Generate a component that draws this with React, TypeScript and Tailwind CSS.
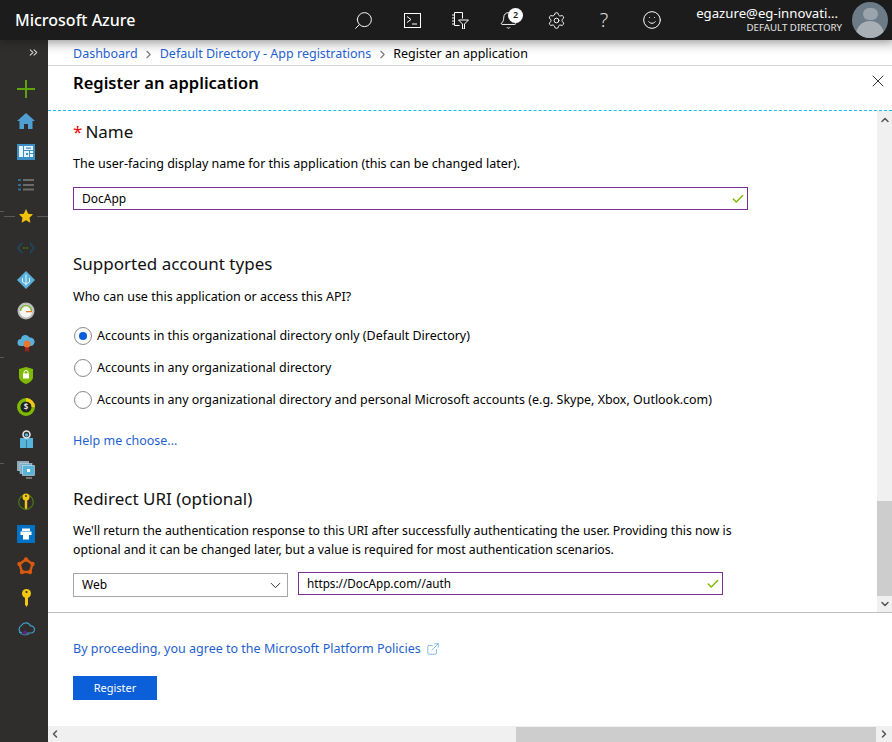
import { Check, ChevronDown, ChevronRight, ChevronsRight, Search, Settings, Smile, X, Bell, ExternalLink } from "lucide-react";

const font = "font-['Noto_Sans','Open_Sans',sans-serif]";

function TerminalIcon() {
  return (
    <svg width="17" height="15" viewBox="0 0 17 15" fill="none" stroke="#fff" strokeWidth="1">
      <rect x="0.5" y="0.5" width="16" height="14" />
      <path d="M3 3.5 7 6.5 3 9.5M8 11h5" />
    </svg>
  );
}

function FilterIcon() {
  return (
    <svg width="17" height="17" viewBox="0 0 17 17" fill="none" stroke="#fff" strokeWidth="1">
      <path d="M2.5 13.5v-13h8v6M2.5 13.5h5" />
      <path d="M0 3h2.5M0 6h2.5M0 9h2.5M0 12h2.5" />
      <path d="M6.5 8h10l-4 4v5h-2v-5z" />
    </svg>
  );
}

function SideIcon({ n }: { n: number }) {
  const icons = [
    <svg width="18" height="18" viewBox="0 0 18 18"><path d="M8 0h2v8h8v2h-8v8H8v-8H0V8h8z" fill="#5ea50b" /></svg>,
    <svg width="18" height="16" viewBox="0 0 18 16"><path d="M9 0 18 8h-2.500v8H11v-5H7v5H2.500V8H0z" fill="#4e9fd3" /></svg>,
    <svg width="18" height="16" viewBox="0 0 18 16"><rect width="18" height="16" fill="#3b8fc4" /><path d="M2 2h4v11H2zM7 2h9v4H7zM7 7h5v6H7zM13 7h3v2h-3zM13 10h3v3h-3z" fill="#e8f3fa" /><path d="M9 3.500h5v1.200H9zM9 9h2v2H9z" fill="#3b8fc4" /></svg>,
    <svg width="16" height="13" viewBox="0 0 16 13"><path d="M5 1h11v2H5zM5 6h11v2H5zM5 10.500h11v2H5z" fill="#6b6b6b" /><path d="M0 1h3v2H0zM0 6h3v2H0zM0 10.500h3v2H0z" fill="#2f6f96" /></svg>,
    <svg width="14" height="14" viewBox="0 0 24 24"><path d="m12 0 3.700 8 8.300 1-6 5.800 1.500 8.700-7.500-4.300-7.500 4.300L6 14.800 0 9l8.300-1z" fill="#f4c20d" /></svg>,
    <svg width="18" height="12" viewBox="0 0 18 12" fill="none"><path d="M5 1 1 6l4 5M13 1l4 5-4 5" stroke="#1f4a60" strokeWidth="1.500" /><path d="M6 6h6" stroke="#3f6212" strokeWidth="2" strokeDasharray="2 1" /></svg>,
    <svg width="18" height="18" viewBox="0 0 18 18"><path d="M9 0 18 9 9 18 0 9z" fill="#58b0dc" /><path d="M9 3.500v11M5.500 7v4l3.500 2 3.500-2V7" stroke="#e5f4fb" fill="none" /></svg>,
    <svg width="18" height="18" viewBox="0 0 18 18"><circle cx="9" cy="9" r="8.500" fill="#b9bcbc" /><circle cx="9" cy="9" r="6.500" fill="#f5f6f1" /><path d="M3.500 9a5.500 5.500 0 0 1 11 0" fill="none" stroke="#7fb23a" strokeWidth="1.500" /><path d="M9 9h6v1.300H9z" fill="#e8792b" /></svg>,
    <svg width="18" height="18" viewBox="0 0 18 18"><path d="M4 12a3.500 3.500 0 0 1 0-7 4.500 4.500 0 0 1 8.500-1.500A4 4 0 0 1 14 12z" fill="#58b0dc" /><path d="M8 13h4v5l-2-1.200L8 18z" fill="#a8201a" /><circle cx="10" cy="10" r="3.500" fill="#e8792b" /></svg>,
    <svg width="14" height="17" viewBox="0 0 14 17"><path d="M7 0 14 2v8c0 3-3 5.500-7 7-4-1.500-7-4-7-7V2z" fill="#7fba00" /><rect x="4" y="6.500" width="6" height="5" fill="#fff" /><path d="M5 7V5.500a2 2 0 0 1 4 0V7" fill="none" stroke="#fff" /></svg>,
    <svg width="18" height="18" viewBox="0 0 18 18"><circle cx="9" cy="9" r="7.300" fill="#222" stroke="#7fba00" strokeWidth="3.400" /><path d="M9 1.700A7.300 7.300 0 0 1 16.300 9" fill="none" stroke="#f2c811" strokeWidth="3.400" /><text x="9" y="12" fontSize="8" fill="#ddd" textAnchor="middle" fontWeight="700">$</text></svg>,
    <svg width="13" height="18" viewBox="0 0 13 18"><rect y="8" width="13" height="10" fill="#59b4d9" /><path d="M6.500 10v8" stroke="#2f7ea3" /><circle cx="6.500" cy="4.500" r="3.500" fill="none" stroke="#e8e8e8" strokeWidth="1.600" /><circle cx="6.500" cy="5" r="1.800" fill="#59b4d9" /></svg>,
    <svg width="18" height="18" viewBox="0 0 18 18"><rect x="0" y="0" width="12" height="10" fill="#8fa8b5" /><rect x="3" y="2.500" width="12" height="10" fill="#6faecb" stroke="#ddd" strokeWidth=".5" /><rect x="5.500" y="4.500" width="12" height="10" fill="#59b4d9" stroke="#eee" strokeWidth=".5" /><path d="M9 16.500h6v1H9z" fill="#bbb" /><path d="M10 8h3v3h-3z" fill="#fff" /></svg>,
    <svg width="16" height="18" viewBox="0 0 16 18"><circle cx="8" cy="9" r="7.300" fill="none" stroke="#4f7a12" strokeWidth="1.200" /><circle cx="8" cy="4" r="3.500" fill="#f2c811" /><path d="M6.800 6h2.400v9L8 16.500 6.800 15z" fill="#f2c811" /><circle cx="8" cy="3" r="1" fill="#2f2f2f" /></svg>,
    <svg width="18" height="18" viewBox="0 0 18 18"><rect width="18" height="18" fill="#0072c6" /><path d="M5 3.500h8V6H5zM3.500 6.500h11V10H3.500zM6 10h6v4.500H6z" fill="#fff" /></svg>,
    <svg width="18" height="18" viewBox="0 0 18 18"><path d="M9 2.500 15.500 7 13 15H5L2.500 7z" fill="none" stroke="#d9590f" strokeWidth="2.400" /><circle cx="9" cy="2.500" r="2.200" fill="#d9590f" /><circle cx="15.500" cy="7" r="2.200" fill="#d9590f" /><circle cx="2.500" cy="7" r="2.200" fill="#d9590f" /><circle cx="13" cy="15" r="2.200" fill="#d9590f" /><circle cx="5" cy="15" r="2.200" fill="#d9590f" /></svg>,
    <svg width="11" height="18" viewBox="0 0 11 18"><circle cx="5.500" cy="4.500" r="4.500" fill="#f2c811" /><path d="M4 8h3v7.500L5.500 18 4 15.500z" fill="#f2c811" /><circle cx="5.500" cy="3" r="1.100" fill="#2f2f2f" /></svg>,
    <svg width="18" height="14" viewBox="0 0 18 14"><path d="M5 11a4 4 0 0 1-.5-7.500 5 5 0 0 1 9 0.500A3.500 3.500 0 0 1 14.500 11H7" fill="none" stroke="#3f9cc8" strokeWidth="1.200" /><path d="M2 10c3 3 6 3.500 10 2" fill="none" stroke="#3f9cc8" /><circle cx="8" cy="10.500" r="2" fill="#68217a" /></svg>,
  ];
  return icons[n];
}

const sideIndexes = Array.from({ length: 18 }, (_, i) => i);

function Radio({ checked, label }: { checked?: boolean; label: string }) {
  return (
    <div className="flex items-center h-8">
      <span className="w-[18px] h-[18px] ml-[1px] rounded-full border border-[#8a8a8a] bg-white flex items-center justify-center shrink-0">
        {checked && <span className="w-[8px] h-[8px] rounded-full bg-[#0b5fd8]" />}
      </span>
      <span className="ml-[5px] text-[12.45px] text-black whitespace-nowrap">{label}</span>
    </div>
  );
}

export default function App() {
  return (
    <div className={`${font} w-[892px] h-[742px] overflow-hidden flex flex-col bg-white`}>
      <header className="h-10 shrink-0 bg-[#1c1c1c] flex items-center text-white relative z-10 shadow-[0_2px_8px_rgba(0,0,0,0.3)]">
        <div className="w-[340px] pl-[15px] text-[16px] font-medium">Microsoft Azure</div>
        <div className="flex items-center h-10">
          <span className="w-12 flex justify-center -scale-x-100"><Search size={21} strokeWidth={1.1} /></span>
          <span className="w-12 flex justify-center"><TerminalIcon /></span>
          <span className="w-12 flex justify-center"><FilterIcon /></span>
          <span className="w-12 flex justify-center relative">
            <Bell size={19} strokeWidth={1.2} />
            <span className="absolute left-[24px] -top-[3px] w-[15px] h-[15px] rounded-full bg-white text-[#1c1c1c] text-[9px] font-semibold flex items-center justify-center">2</span>
          </span>
          <span className="w-12 flex justify-center"><Settings size={19} strokeWidth={1.2} /></span>
          <span className="w-12 flex justify-center text-[20px] font-light text-[#ddd]">?</span>
          <span className="w-12 flex justify-center"><Smile size={20} strokeWidth={1.2} /></span>
        </div>
        <div className="ml-auto w-[150px] text-right leading-none">
          <div className="text-[13.2px] whitespace-nowrap pr-[4px]">egazure@eg-innovati...</div>
          <div className="text-[9.7px] mt-[3px] text-[#e6e6e6] whitespace-nowrap">DEFAULT DIRECTORY</div>
        </div>
        <div className="w-9 h-9 rounded-full bg-[#6d7b87] ml-[10px] mr-[4px] overflow-hidden flex flex-col items-center shrink-0">
          <span className="w-[15px] h-[15px] rounded-full bg-[#9aa4ac] mt-[6px]" />
          <span className="w-7 h-5 rounded-t-full bg-[#a8b0b6] mt-[1px]" />
        </div>
      </header>

      <div className="flex-1 flex min-h-0">
        <aside className="w-12 shrink-0 bg-[#2f2e2d] relative text-[#cfcfcf] pl-[4px]">
          <div className="h-[33px] flex items-start justify-end pr-[8px] pt-[6px]"><ChevronsRight size={13} /></div>
          {sideIndexes.map((i) => (
            <div key={i} className={`h-[31.8px] flex items-center ${i === 4 ? "justify-start gap-[4px]" : "justify-center"}`}>
              {i === 4 && <span className="w-[11px] h-px bg-[#5a5a5a] shrink-0" />}
              <SideIcon n={i} />
              {i === 4 && <span className="w-[11px] h-px bg-[#5a5a5a] shrink-0" />}
            </div>
          ))}
          <span className="absolute left-0 top-[171px] w-1 h-px bg-[#5a5a5a]" />
          <span className="absolute left-0 top-[317px] w-1 h-px bg-[#5a5a5a]" />
          <span className="absolute left-0 top-[423px] w-1 h-px bg-[#5a5a5a]" />
        </aside>

        <main className="flex-1 min-w-0 flex flex-col">
          <div className="h-[26px] shrink-0 border-b border-[#d4d4d4] bg-gradient-to-b from-[#e4e4e4] to-white to-60% pl-[25px] pt-[4px] flex items-center text-[12.5px] whitespace-nowrap">
            <span className="text-[#1f5fd0]">Dashboard</span>
            <ChevronRight size={13} className="mx-[4.5px] text-[#777]" />
            <span className="text-[#1f5fd0]">Default Directory - App registrations</span>
            <ChevronRight size={13} className="mx-[4.5px] text-[#777]" />
            <span className="text-black">Register an application</span>
          </div>

          <div className="h-[45px] shrink-0 border-b border-dashed border-[#15bdf0] pl-[25px] pr-[4px] flex items-start justify-between">
            <h1 className="text-[16.55px] font-semibold text-black mt-[5px] leading-6">Register an application</h1>
            <X size={20} strokeWidth={1.2} className="mt-[5px] text-[#333]" />
          </div>

          <div className="h-[502px] shrink-0 flex border-b border-[#bdbdbd]">
            <div className="flex-1 min-w-0 pl-[25px] pt-[9px]">
              <div className="text-[17px] leading-6 text-[#111]"><span className="text-[#e00] mr-[3px]">*</span>Name</div>
              <p className="text-[12.5px] mt-[10px] leading-5 text-black">The user-facing display name for this application (this can be changed later).</p>
              <div className="w-[675px] h-[23px] mt-[13px] border border-[#7a2f96] flex items-center justify-between pl-2 pr-[2px] text-[12px] text-black">
                DocApp
                <Check size={14} strokeWidth={2.5} className="text-[#7fba00]" />
              </div>

              <h2 className="text-[17px] leading-6 text-[#111] mt-[42px]">Supported account types</h2>
              <p className="text-[12.5px] mt-[11px] leading-5 text-black">Who can use this application or access this API?</p>
              <div className="mt-[13px]">
                <Radio checked label="Accounts in this organizational directory only (Default Directory)" />
                <Radio label="Accounts in any organizational directory" />
                <Radio label="Accounts in any organizational directory and personal Microsoft accounts (e.g. Skype, Xbox, Outlook.com)" />
              </div>
              <div className="text-[12.5px] text-[#1f5fd0] mt-[15px] leading-5">Help me choose...</div>

              <h2 className="text-[17px] leading-6 text-[#111] mt-[36px]">Redirect URI (optional)</h2>
              <p className="text-[12.28px] mt-[10px] leading-[19px] text-black w-[690px]">We'll return the authentication response to this URI after successfully authenticating the user. Providing this now is optional and it can be changed later, but a value is required for most authentication scenarios.</p>
              <div className="flex mt-[13px] gap-[10px] items-start">
                <div className="w-[215px] h-6 mt-[1px] border border-[#a6a6a6] flex items-center justify-between pl-2 pr-[3px] text-[12px] text-black">
                  Web
                  <ChevronDown size={17} strokeWidth={1.4} className="text-[#333]" />
                </div>
                <div className="w-[425px] h-[23px] border border-[#7a2f96] flex items-center justify-between pl-2 pr-[2px] text-[11.7px] text-black">
                  https://DocApp.com//auth
                  <Check size={14} strokeWidth={2.5} className="text-[#7fba00]" />
                </div>
              </div>
            </div>
            <div className="w-[15px] shrink-0 bg-[#f0f0f0] flex flex-col items-center text-[#555]">
              <ChevronDown size={12} strokeWidth={3} className="rotate-180 mt-[3px]" />
              <div className="mt-auto w-full h-[95px] bg-[#cdcdcd]" />
              <ChevronDown size={12} strokeWidth={3} className="my-[2px]" />
            </div>
          </div>

          <div className="flex-1 min-h-0 pl-[25px] pt-[26px]">
            <div className="flex items-center text-[12.53px] text-[#1f5fd0] leading-5">
              By proceeding, you agree to the Microsoft Platform Policies
              <ExternalLink size={14} strokeWidth={1.2} className="ml-[5px] text-[#4f9fd6]" />
            </div>
            <div className="w-[84px] h-6 mt-[17px] bg-[#0b5fd8] text-white text-[11px] flex items-center justify-center">Register</div>
          </div>

          <div className="h-4 shrink-0 bg-[#f0f0f0] flex items-center text-[#555]">
            <ChevronDown size={12} strokeWidth={3} className="rotate-90 ml-[1px]" />
            <div className="ml-[455px] w-[360px] h-[15px] bg-[#cdcdcd]" />
            <ChevronDown size={12} strokeWidth={3} className="-rotate-90 ml-[2px]" />
          </div>
        </main>
      </div>
    </div>
  );
}
